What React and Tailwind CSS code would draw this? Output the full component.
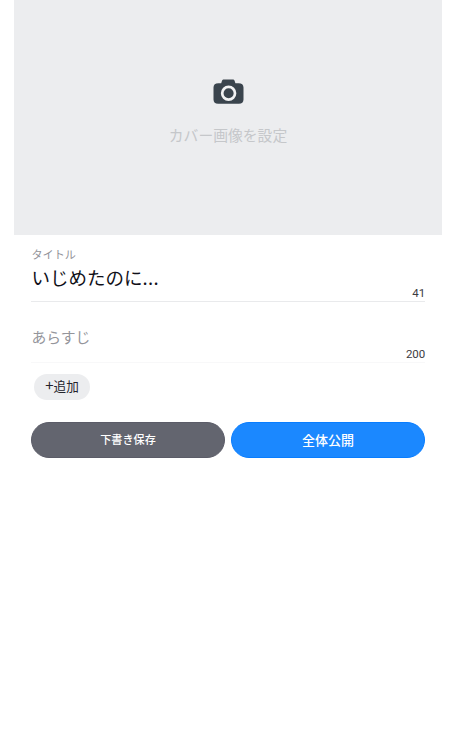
import React from 'react';

const CameraIcon = () => (
  <svg width="31" height="26" viewBox="0 0 31 26" aria-hidden="true">
    <path
      fill="#3a444d"
      d="M11 .6h8.600c1 0 1.700.4 2 1.200l.8 2.400h3.200c3.200 0 4.900 1.500 4.900 4.300v12c0 2.800-1.700 4.300-4.600 4.300H5.100c-2.900 0-4.600-1.500-4.600-4.300v-12c0-2.800 1.700-4.300 4.900-4.300h2.800L9 1.800C9.300 1 10 .6 11 .6z"
    />
    <circle cx="15.600" cy="14.200" r="6.400" fill="none" stroke="#f1f2f3" strokeWidth="2.700" />
  </svg>
);

export const StoryForm = () => {
  return (
    <form className="px-[17px]" onSubmit={(e) => e.preventDefault()}>
      <div className="h-[67px] border-b border-[#e9eaec] pt-[11px] flex justify-between">
        <div>
          <p className="ml-[0.5px] text-[11.100px] leading-4 text-[#929399]">タイトル</p>
          <p className="mt-[3px] ml-[0.5px] text-[18.5px] leading-6 text-[#101018]">
            いじめたのに<span className="tracking-[0.4px]">...</span>
          </p>
        </div>
        <span className="self-end font-[Roboto] text-[11.5px] leading-4 tracking-[-0.1px] text-[#3c3c42]">41</span>
      </div>

      <div className="h-[61px] border-b border-[#f8f8f9] pt-[23px] flex justify-between">
        <p className="ml-[0.5px] text-[14.8px] leading-6 text-[#94959b]">あらすじ</p>
        <span className="self-end font-[Roboto] text-[11.5px] leading-4 tracking-[-0.1px] text-[#3c3c42]">200</span>
      </div>

      <button
        type="button"
        className="mt-[11px] ml-[3px] block h-[26px] w-[56px] rounded-full bg-[#ecedef] pb-[3px] text-[12.600px] leading-[23px] text-[#24242c]"
      >
        <span className="text-[15px] leading-none">+</span>追加
      </button>

      <div className="mt-[22px] flex gap-[6px]">
        <button
          type="button"
          className="h-[36px] flex-1 rounded-full border border-[#5b5c68] bg-[#63656f] pb-px text-[11.100px] font-medium text-white"
        >
          下書き保存
        </button>
        <button
          type="button"
          className="h-[36px] flex-1 rounded-full border border-[#087dff] bg-[#1b88ff] pb-px text-[13px] font-medium text-white"
        >
          全体公開
        </button>
      </div>
    </form>
  );
};

const App = () => {
  return (
    <div className="min-h-screen bg-white px-[14px] font-['Noto_Sans_CJK_JP',sans-serif]">
      <div className="flex h-[235px] flex-col items-center bg-[#ecedef] pt-[79px]">
        <CameraIcon />
        <p className="mt-[18px] text-[14.8px] leading-6 text-[#c5c7ca]">カバー画像を設定</p>
      </div>
      <StoryForm />
    </div>
  );
};

export default App;
